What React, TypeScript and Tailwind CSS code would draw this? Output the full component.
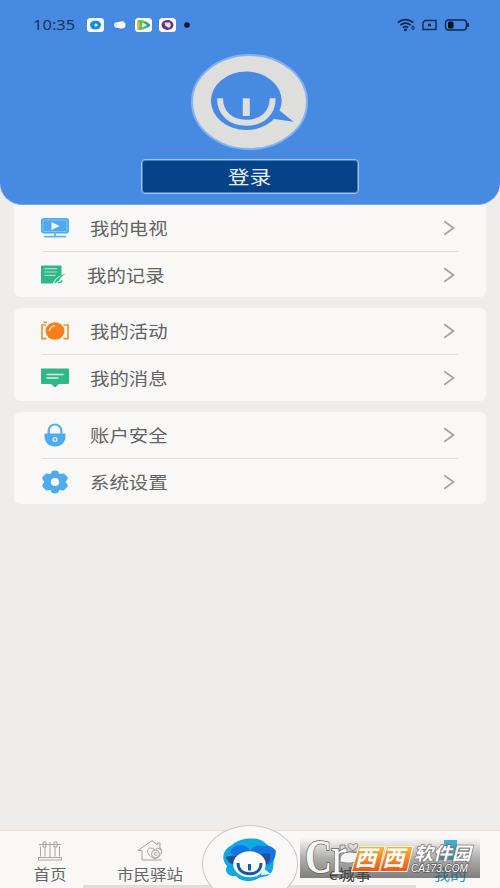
import React from 'react';

const sans = "font-['Noto_Sans_CJK_SC',sans-serif]";

function TvIcon() {
  return (
    <svg width="28" height="20" viewBox="0 0 28 20">
      <rect x="0" y="0" width="28" height="15.5" rx="3" fill="#4da9f0" />
      <rect x="2" y="2" width="24" height="11.5" rx="2" fill="none" stroke="#91cbf6" strokeWidth=".8" />
      <path d="M10.5 4v8l8-4z" fill="#f9f8f6" />
      <path d="M14 15v3M3.5 18.6H24.5" stroke="#63b5f2" strokeWidth="1.8" strokeLinecap="round" />
    </svg>
  );
}

function RecordIcon() {
  return (
    <svg width="28" height="20" viewBox="0 0 28 20">
      <path d="M1 .5h19.500v9.500c-4 1.500-7 4-8.500 8.500H0V1.500Q0 .5 1 .5z" fill="#2fb885" />
      <path d="M3.500 3.700h12.500M3.500 7h12.500M3.500 10.300h11" stroke="#a9dfc8" strokeWidth="1.200" />
      <path d="M13 18.500c1-4.800 5-8.500 11-9.500-1.500 1.500-3 2-4 3.500-2 3.500-3.500 5-7 6z" fill="#2fb885" />
      <path d="M12.500 18.300q2-5 7-7.300" stroke="#d7f0e5" strokeWidth=".8" fill="none" />
      <path d="M17 17.800q3-.2 4.500-2.500" stroke="#2fb885" strokeWidth="1.300" fill="none" />
    </svg>
  );
}

function CameraIcon() {
  return (
    <svg width="28" height="20" viewBox="0 0 28 20">
      <g fill="none" stroke="#f58f3c" strokeWidth="1.700">
        <path d="M5 4H1v13.700h4.500M22.500 4H27v13.700h-4.500M2.500 1.300h3.500" />
      </g>
      <ellipse cx="14" cy="10" rx="9.500" ry="8.700" fill="#f97f1c" />
      <path d="M8.500 9.300q1-3.800 5-4.200" stroke="#ffd9b5" strokeWidth="1.500" strokeLinecap="round" fill="none" />
    </svg>
  );
}

function MessageIcon() {
  return (
    <svg width="28" height="20" viewBox="0 0 28 20">
      <path d="M1 .5h26q1 0 1 1V15q0 1-1 1H18l-4 3.500L10 16H1q-1 0-1-1V1.500q0-1 1-1z" fill="#2fb885" />
      <path d="M6 6.500h16M6 10h11" stroke="#d8f0e6" strokeWidth="1.400" strokeLinecap="round" />
    </svg>
  );
}

function LockIcon() {
  return (
    <svg width="28" height="24" viewBox="0 0 28 24">
      <path d="M7.700 11V7.500a6.300 6 0 0 1 12.600 0V11" fill="none" stroke="#55aef2" strokeWidth="2.200" />
      <path d="M3.500 10.500h21v3c0 6-4.500 10-10.500 10s-10.500-4-10.500-10z" fill="#4dabf2" />
      <circle cx="14" cy="16.500" r="1.900" fill="none" stroke="#e4f2fc" strokeWidth="1.200" />
    </svg>
  );
}

function GearIcon() {
  return (
    <svg width="28" height="24" viewBox="0 0 28 24">
      <path
        fillRule="evenodd"
        d="M11 .9Q14 .2 17 .9L18.400 4 22.800 3.500Q25.400 5.300 27 8.200L24.700 12 27 15.500Q25.400 18.600 22.800 20.500L18.400 20 17 23.100Q14 23.800 11 23.100L9.600 20 5.200 20.500Q2.600 18.600 1 15.500L3.300 12 1 8.200Q2.600 5.300 5.200 3.500L9.600 4zM14 8a4.200 4 0 1 0 0 8 4.200 4 0 0 0 0-8z"
        fill="#4dabf2"
      />
    </svg>
  );
}

type Item = { label: string; icon: React.ReactNode; near?: boolean };

const groups: Item[][] = [
  [
    { label: '我的电视', icon: <TvIcon /> },
    { label: '我的记录', icon: <RecordIcon />, near: true },
  ],
  [
    { label: '我的活动', icon: <CameraIcon /> },
    { label: '我的消息', icon: <MessageIcon /> },
  ],
  [
    { label: '账户安全', icon: <LockIcon /> },
    { label: '系统设置', icon: <GearIcon /> },
  ],
];

function Row({ item }: { item: Item }) {
  return (
    <div className="flex h-[46px] items-center pr-[3px]">
      <div className="-ml-px flex w-7 justify-center">{item.icon}</div>
      <span
        className={`origin-left scale-x-[1.14] text-[17px] leading-6 text-[#636363] ${item.near ? 'ml-[18px]' : 'ml-[21px]'}`}
      >
        {item.label}
      </span>
      <svg className="ml-auto" width="12" height="16" viewBox="0 0 12 16">
        <path d="M1.200 1.200 10.500 8 1.200 14.800" fill="none" stroke="#a3a3a2" strokeWidth="1.700" />
      </svg>
    </div>
  );
}

function Status() {
  return (
    <div className="flex h-[50px] items-center pl-[33px] pr-[31px] text-[#17345f]">
      <span className="-mt-px w-[43px] origin-left scale-x-[1.1] whitespace-nowrap font-['Noto_Sans',sans-serif] text-[15px]">
        10:35
      </span>
      <svg className="ml-[11px]" width="106" height="16" viewBox="0 0 106 16">
        <rect x="0" y="1" width="17" height="14" rx="3.500" fill="#fff" />
        <ellipse cx="8.500" cy="8" rx="5.500" ry="4.500" fill="#168ddc" />
        <circle cx="9" cy="8" r="1.500" fill="#fff" />
        <rect x="24" y="1" width="17" height="14" rx="3" fill="#4389ea" />
        <rect x="27" y="5" width="8" height="6" rx="3" fill="#dce7ff" />
        <rect x="30" y="4.500" width="8.500" height="7" rx="3.500" fill="#fffbed" />
        <circle cx="36" cy="5" r="1" fill="#f4d36a" />
        <rect x="48" y="1" width="17" height="14" rx="3.500" fill="#fff" />
        <path d="M51 3Q59 2.500 63.500 8 59 13 51 13q-2-5 0-10z" fill="#4fbf62" />
        <path d="M51 3q4 5 0 10-2-5 0-10z" fill="#f3b429" />
        <path d="m58 4.500 5.500 3.500-3 3z" fill="#2593cd" />
        <path d="m55 5.500 5 2.500-5 2.500z" fill="#f4f9e9" />
        <rect x="72" y="1" width="17" height="14" rx="3.500" fill="#fff" />
        <ellipse cx="80.500" cy="8" rx="6" ry="5" fill="#5e397f" />
        <path d="M77.500 5.500h5.500l1 3-2 2.500-3.500-2z" fill="#ead9f2" />
        <circle cx="100" cy="8" r="2.800" fill="#08172d" />
      </svg>
      <svg className="ml-auto" width="72" height="14" viewBox="0 0 72 14" fill="none" stroke="#10284d" strokeWidth="1.400">
        <path d="M.8 4.500Q8.500-1.200 16.200 4.500M3.300 7.100q5.200-3.800 10.400 0M5.800 9.500q2.700-1.800 5.400 0" strokeWidth="1.700" />
        <circle cx="8.500" cy="11.700" r=".8" fill="#10284d" />
        <rect x="15" y="8" width="2" height="3.500" rx="1" strokeWidth="1" />
        <path d="M28 2.500h11v9H26v-7z" />
        <path d="M31 7h3" strokeWidth="2.500" />
        <rect x="48.500" y="2" width="21" height="10" rx="3" />
        <rect x="51" y="3.500" width="5.500" height="7" rx="1.500" fill="#071225" stroke="none" />
        <path d="M71 5v4" strokeWidth="1.800" />
      </svg>
    </div>
  );
}

function Avatar() {
  return (
    <svg className="ml-[190px]" width="120" height="98" viewBox="0 0 120 98">
      <ellipse cx="59.500" cy="49" rx="57.500" ry="47" fill="#dededc" stroke="#85b2ee" strokeWidth="2" />
      <ellipse cx="56.300" cy="47.800" rx="35.400" ry="29.200" fill="#478ae2" />
      <path d="M89.500 57.500 103.500 68.800 81 65.500z" fill="#478ae2" />
      <path d="M30 45.300C30 60.500 41 69.700 56.300 69.700S82.700 60.500 82.700 45.300" fill="none" stroke="#dededc" strokeWidth="6" />
      <path d="M56.300 45.300V63" stroke="#dededc" strokeWidth="7" />
    </svg>
  );
}

function Tab({ label, icon, className, text }: { label: string; icon: React.ReactNode; className: string; text: string }) {
  return (
    <div className={`flex flex-col items-center ${className}`}>
      <div className="mt-2 flex h-[22px] items-end">{icon}</div>
      <span className={`mt-[2px] scale-x-[1.1] whitespace-nowrap text-[15px] leading-[22px] ${text}`}>{label}</span>
    </div>
  );
}

function HomeIcon() {
  return (
    <svg width="24" height="20" viewBox="0 0 24 20" fill="none" stroke="#a7a7a5" strokeWidth="1">
      <path d="M1 3.500h22M2.500 5.500v10M7 5.500v10M17 5.500v10M21.500 5.500v10M12 1v15M5 1h3v5H5zM16 1h3v5h-3zM.5 16.500h23v2.500H.5z" />
    </svg>
  );
}

function StationIcon() {
  return (
    <svg width="26" height="21" viewBox="0 0 26 21" fill="none" stroke="#a3a3a1" strokeWidth="1">
      <path d="M5 20V10.500H1L15 .7l5.500 4V3H23v5l2 2.500M5 20h20" />
      <path d="M18 19c-7-3-10-9-5-11q3-.5 5 2 2-3 5-1c4 3 0 8-5 10z" />
      <ellipse cx="18.500" cy="14" rx="4" ry="3.700" />
      <path d="M20.500 13q-3-1.500-3.500 1 .500 2 3.500 1" />
    </svg>
  );
}

function MascotIcon() {
  return (
    <svg width="54" height="44" viewBox="0 0 54 44">
      <path d="M9 7C15 1 24 0 31 .5 39 1 42 5 46 8c8 3 7 9 5 14-1 5 0 9-3 13-4 5-10 3-14 6-8 4-17 2-21-3-8 1-12-4-9-10C-2 22-1 12 9 7z" fill="#12a8e0" />
      <path d="M7 15Q9 7 17 7q7 0 10 6l-8 8zM27 13q5-7 12-5 10-1 14 5-1 9-7 14l-9-5z" fill="#1473e6" />
      <path d="M3 19q7-3 15 0l-7 8Q4 24 3 19zM34 18q8-4 13-2 1 7-5 12z" fill="#234f97" />
      <ellipse cx="26.500" cy="26.300" rx="16.200" ry="13" fill="#fbfbfa" />
      <path d="m40 30 8 6-10 1z" fill="#fbfbfa" />
      <path d="M15 25c0 7 4.500 10.700 11.500 10.700S38 32 38 25M26.500 26v6.500" fill="none" stroke="#125b9e" strokeWidth="3" />
    </svg>
  );
}

function Watermark() {
  return (
    <div className="absolute left-[300px] top-[838px] h-10 w-[180px] bg-gradient-to-b from-[#50505000] via-[#50505070] to-[#404040a8]">
      <svg className="overflow-visible" width="180" height="40" viewBox="0 0 180 40">
        <text x="5" y="35" fontFamily="Liberation Serif, serif" fontSize="49" fontWeight="bold" textLength="27" lengthAdjust="spacingAndGlyphs" fill="#f5f5f5" stroke="#666" strokeWidth="1.600" paintOrder="stroke">C</text>
        <text x="31" y="35.500" fontFamily="Liberation Serif, serif" fontSize="54" textLength="16" lengthAdjust="spacingAndGlyphs" fill="#f5f5f5" stroke="#666" strokeWidth="1.600" paintOrder="stroke">r</text>
        <path d="M40 24q-1-10 10-10 6 2 13-1-4 14-17 12z" fill="#f5f5f5" stroke="#777" strokeWidth=".8" />
        <defs>
          <linearGradient id="orange" x2="0" y2="1">
            <stop stopColor="#f5b636" />
            <stop offset="1" stopColor="#e8561f" />
          </linearGradient>
        </defs>
        <path d="M59 8.500h26l-6 25H51.500zM87 8.500h26l-6 25H79.500z" fill="url(#orange)" stroke="#fff1df" strokeWidth="1" />
        <g transform="skewX(-14)" fill="#fff" fontFamily="Noto Sans CJK SC, sans-serif">
          <text x="61.500 89.500" y="28.500" fontSize="22" fontWeight="700">西西</text>
          <text x="119.500" y="22" fontSize="18" fontWeight="700" textLength="57" lengthAdjust="spacingAndGlyphs" stroke="#707070" strokeWidth="1.400" paintOrder="stroke">软件园</text>
        </g>
        <text x="111" y="34" fontFamily="Liberation Sans, sans-serif" fontSize="11" fontStyle="italic" textLength="57" lengthAdjust="spacingAndGlyphs" fill="#fff" stroke="#606060" strokeWidth="1.600" paintOrder="stroke">CA173.COM</text>
      </svg>
    </div>
  );
}

export default function App() {
  return (
    <div className={`relative flex h-[888px] w-[500px] flex-col overflow-hidden bg-[#eeedec] ${sans}`}>
      <header className="z-10 h-[205px] shrink-0 rounded-b-[22px] border-b border-[#78a7e8] bg-[#478ae2]">
        <Status />
        <div className="mt-[3px]">
          <Avatar />
        </div>
        <button className="ml-[141px] mt-[8px] flex h-[35px] w-[218px] items-center justify-center rounded-[4px] border border-[#a3c6f0] bg-[#064288] text-[18.5px] text-[#e6edf7] ring-1 ring-inset ring-[#4a7fbe]">
          <span className="scale-x-[1.18]">登录</span>
        </button>
      </header>

      <main className="flex flex-1 flex-col gap-[11px] px-[14px]">
        {groups.map((group, i) => (
          <section
            key={group[0].label}
            className={`rounded-b-[6px] bg-[#f9f8f6] px-7 ${i === 0 ? 'h-[92px]' : 'h-[92.5px] rounded-t-[6px]'}`}
          >
            <Row item={group[0]} />
            <div className="h-px bg-[#dfdfdd]" />
            <Row item={group[1]} />
          </section>
        ))}
      </main>

      <nav className="relative flex h-[58px] shrink-0 border-t border-[#e6ded7] bg-[#f9f8f6]">
        <Tab className="w-[100px]" label="首页" text="text-[#666]" icon={<HomeIcon />} />
        <Tab className="w-[100px]" label="市民驿站" text="text-[#666]" icon={<StationIcon />} />
        <div className="w-[100px]" />
        <Tab
          className="w-[100px]"
          label="e城事"
          text="text-[#444]"
          icon={
            <svg width="24" height="20" viewBox="0 0 24 20" fill="none" stroke="#999" strokeWidth="1">
              <path d="M2 19V4h5v15m4 0V11h9v8M15 10c-8-5-5-10 0-6 5-4 8 1 0 6z" />
            </svg>
          }
        />
        <Tab
          className="w-[100px]"
          label="我的"
          text="text-[#1ba6d8]"
          icon={
            <svg width="24" height="21" viewBox="0 0 24 21" fill="#42b5dc">
              <path d="M6 0h13v8q5 1 4 12H1Q0 9 6 8z" />
            </svg>
          }
        />
        <div className="absolute bottom-0 left-[83px] h-[3px] w-[333px] bg-[#dededd]" />
        <div className="absolute -top-[6px] left-[202px] flex h-[78px] w-[96px] justify-center rounded-[50%] border border-[#c9c9c8] bg-[#f9f8f7] pt-3">
          <MascotIcon />
        </div>
      </nav>
      <Watermark />
    </div>
  );
}
